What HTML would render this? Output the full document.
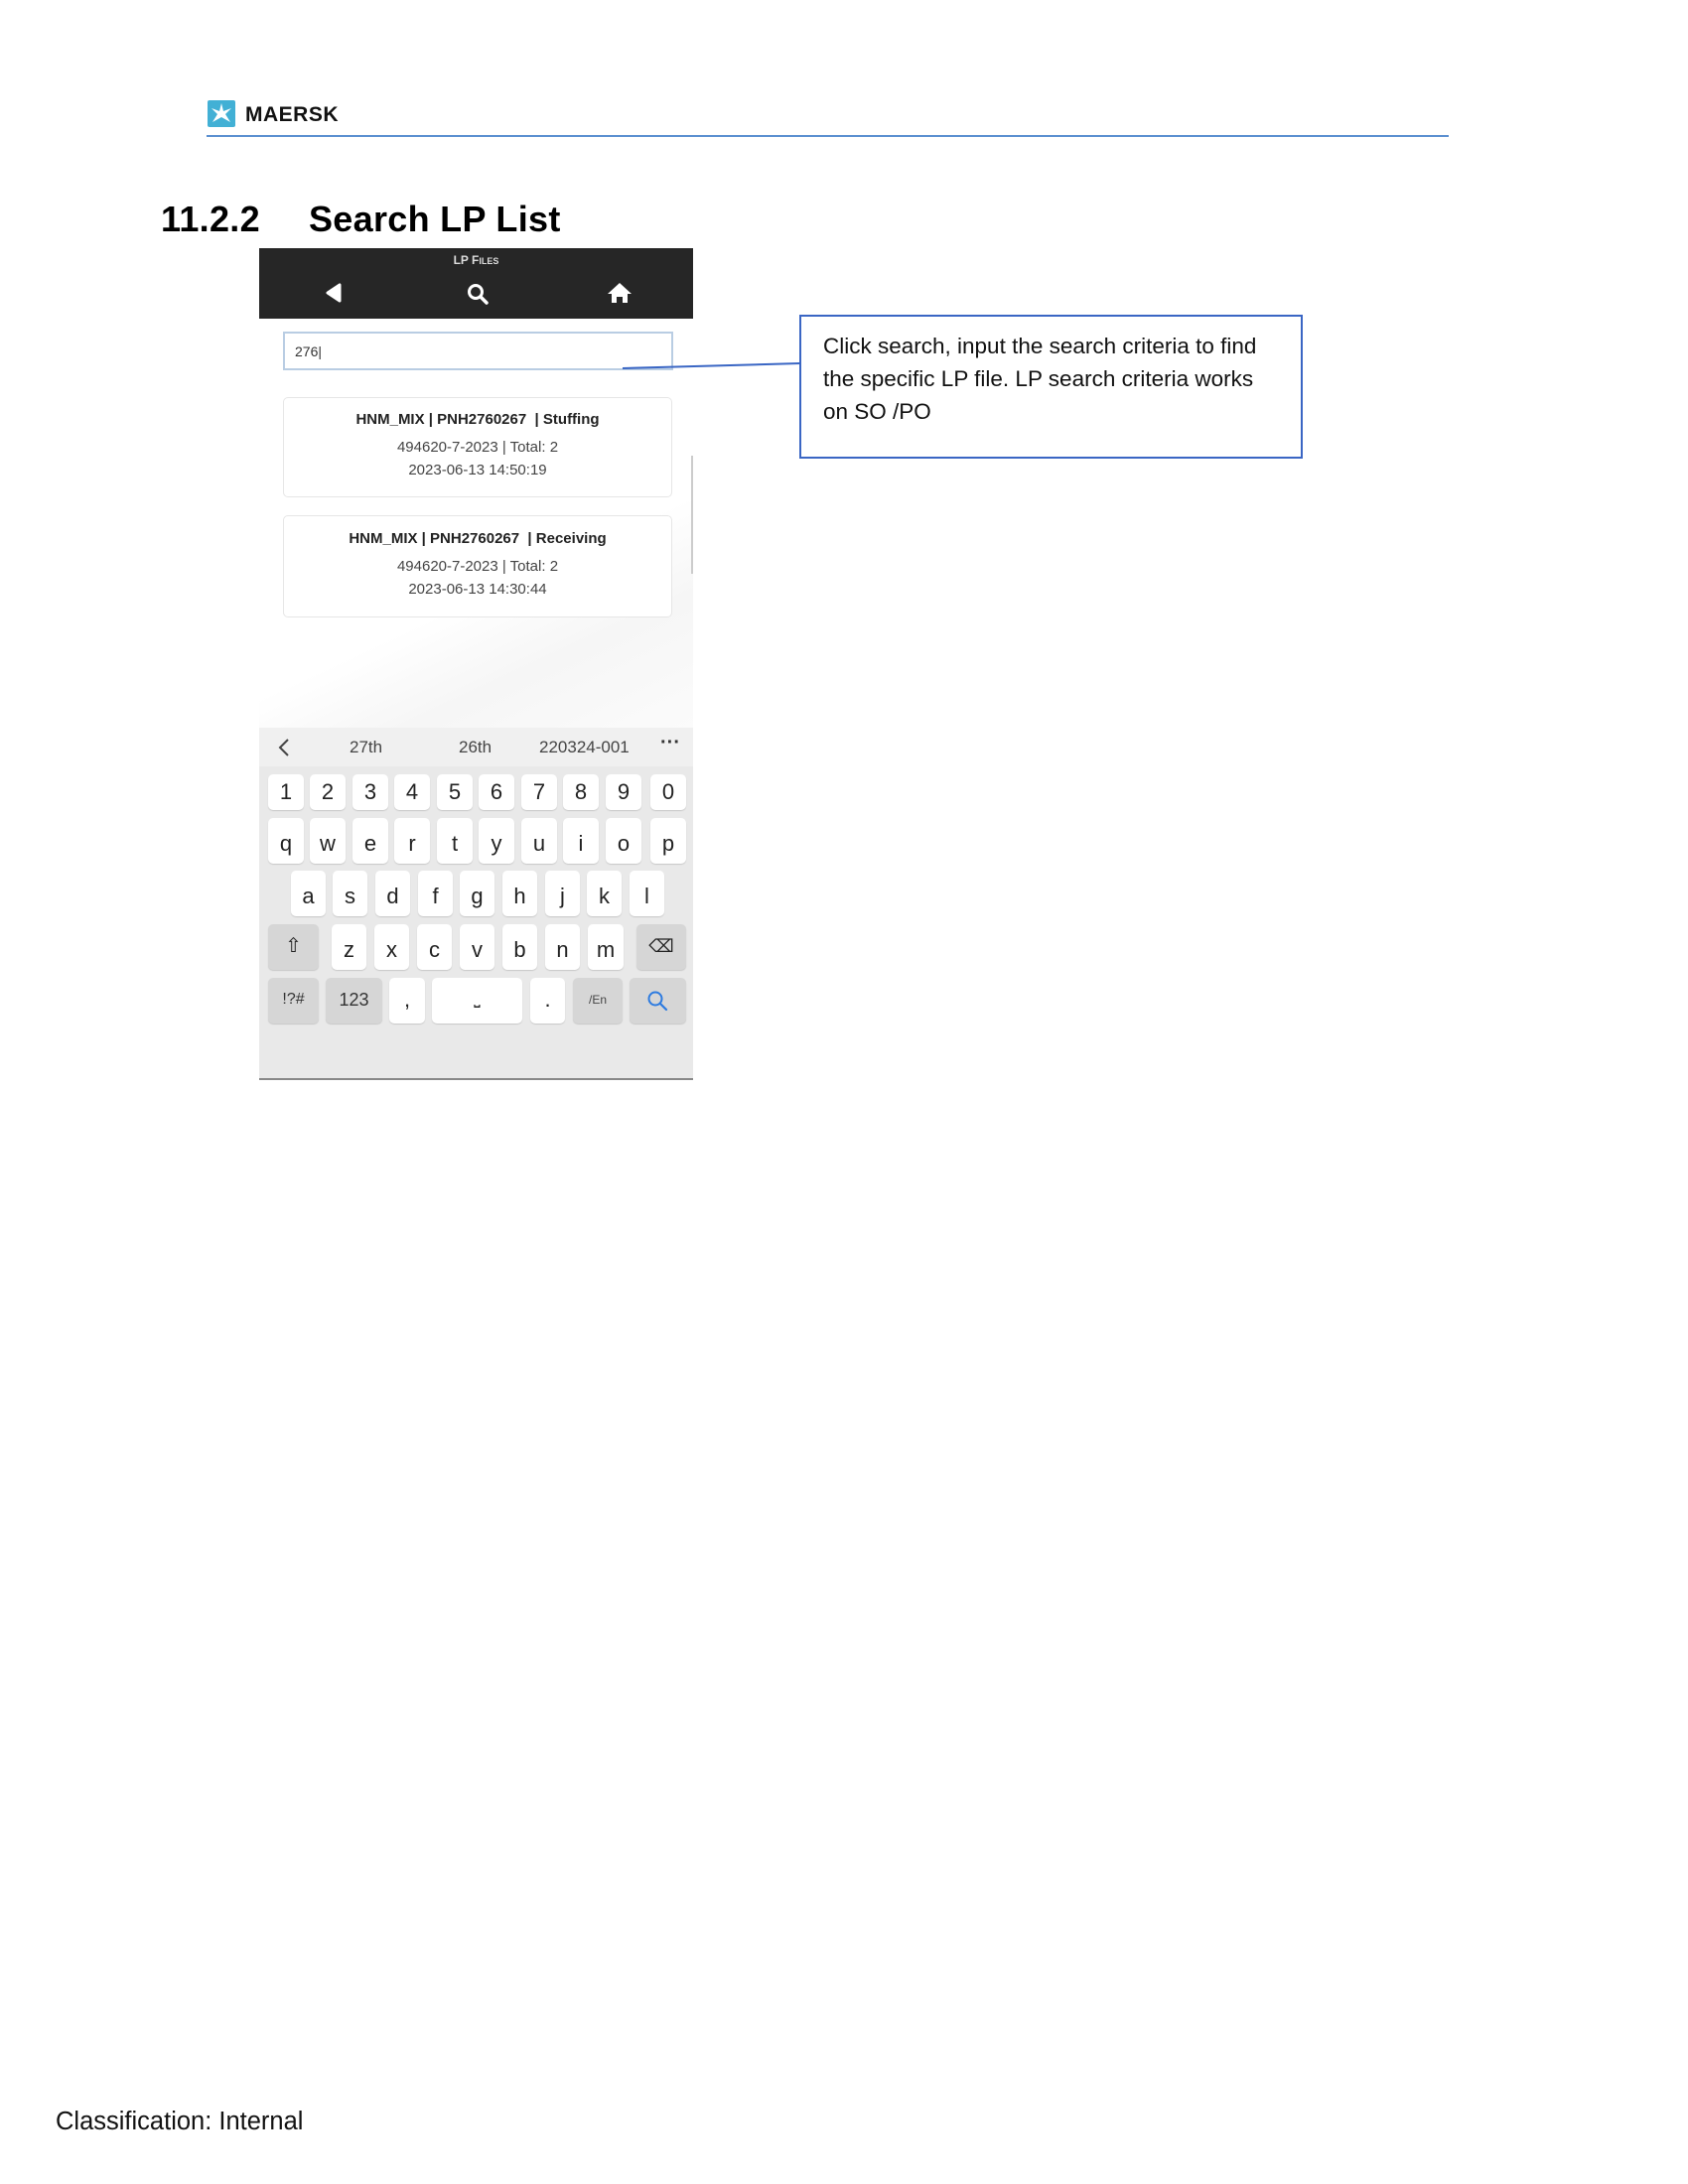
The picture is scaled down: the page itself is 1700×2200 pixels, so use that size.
<!DOCTYPE html>
<html><head><meta charset="utf-8"><style>
*{margin:0;padding:0;box-sizing:border-box}
body{width:1700px;height:2200px;background:#fff;position:relative;font-family:"Liberation Sans",Arial,sans-serif;overflow:hidden}
.a{position:absolute}
.key{position:absolute;background:#fff;border-radius:5px;box-shadow:0 1px 1px #c8c8c8;font-size:22px;color:#222;text-align:center;line-height:44px}
.g{background:#d6d6d6}
.card{position:absolute;left:285px;width:392px;background:#fff;border:1px solid #e6e6e6;border-radius:5px;text-align:center;color:#444;font-size:15px}
.card b{color:#222}
</style></head><body>
<!-- header -->
<div class="a" style="left:209px;top:101px;width:28px;height:27px;background:#42b0d5;border-radius:2px"></div>
<svg class="a" style="left:209px;top:101px" width="28" height="27" viewBox="0 0 28 27"><g fill="#fff"><polygon points="14,3 16,11 24,8 18,14 23,22 14,17 5,22 10,14 4,8 12,11"/></g></svg>
<div class="a" style="left:247px;top:104px;font-size:21px;font-weight:bold;color:#111;letter-spacing:0.5px">MAERSK</div>
<div class="a" style="left:208px;top:136px;width:1251px;height:2px;background:#5b8fd0"></div>
<div class="a" style="left:162px;top:200px;font-size:36px;font-weight:bold;color:#000;letter-spacing:0.3px">11.2.2</div>
<div class="a" style="left:311px;top:200px;font-size:36px;font-weight:bold;color:#000;letter-spacing:0.3px">Search LP List</div>

<!-- phone -->
<div class="a" style="left:261px;top:250px;width:437px;height:71px;background:#262626"></div>
<div class="a" style="left:261px;top:255px;width:437px;text-align:center;color:#ddd;font-size:12px;font-weight:bold">LP F<span style="font-size:9px">ILES</span></div>
<svg class="a" style="left:326px;top:284px" width="22" height="22"><polygon points="4,11 16,3 16,19" fill="#fff" stroke="#fff" stroke-width="3" stroke-linejoin="round"/></svg>
<svg class="a" style="left:469px;top:284px" width="24" height="24"><circle cx="10" cy="10" r="6.5" fill="none" stroke="#fff" stroke-width="3"/><line x1="15" y1="15" x2="21" y2="21" stroke="#fff" stroke-width="3.5" stroke-linecap="round"/></svg>
<svg class="a" style="left:611px;top:283px" width="26" height="24"><polygon points="13,2 25,13 21,13 21,22 16,22 16,16 10,16 10,22 5,22 5,13 1,13" fill="#fff"/></svg>
<div class="a" style="left:261px;top:321px;width:437px;height:413px;background:linear-gradient(155deg,#fff 62%,#f6f6f6 78%,#fbfbfb)"></div>
<div class="a" style="left:285px;top:334px;width:393px;height:39px;border:2px solid #b9cde3;background:#fff;font-size:14px;color:#333;padding:10px 0 0 10px">276|</div>
<div class="a" style="left:696px;top:459px;width:2px;height:119px;background:#ccc"></div>
<div class="card" style="top:400px;height:101px"><div style="margin-top:13px"><b>HNM_MIX | PNH2760267 &nbsp;| Stuffing</b></div><div style="margin-top:11px">494620-7-2023 | Total: 2</div><div style="margin-top:6px">2023-06-13 14:50:19</div></div>
<div class="card" style="top:519px;height:103px"><div style="margin-top:14px"><b>HNM_MIX | PNH2760267 &nbsp;| Receiving</b></div><div style="margin-top:11px">494620-7-2023 | Total: 2</div><div style="margin-top:6px">2023-06-13 14:30:44</div></div>

<!-- connector & callout -->
<svg class="a" style="left:0;top:0" width="1700" height="500"><line x1="627" y1="371" x2="806" y2="366" stroke="#3a66c4" stroke-width="2"/></svg>
<div class="a" style="left:805px;top:317px;width:507px;height:145px;border:2px solid #3a66c4;background:#fff;padding:13px 0 0 22px;font-size:22.5px;line-height:33px;color:#111;white-space:nowrap">Click search, input the search criteria to find<br>the specific LP file. LP search criteria works<br>on SO /PO</div>

<!-- keyboard -->
<div class="a" style="left:261px;top:733px;width:437px;height:355px;background:#e9e9e9;border-bottom:2px solid #888"></div>
<div class="a" style="left:261px;top:733px;width:437px;height:39px;background:#f0f0f0;font-size:17px;color:#444"></div>
<svg class="a" style="left:278px;top:742px" width="16" height="22"><polyline points="12,3 4,11 12,19" fill="none" stroke="#444" stroke-width="2"/></svg>
<div class="a" style="left:352px;top:743px;font-size:17px;color:#444">27th</div>
<div class="a" style="left:462px;top:743px;font-size:17px;color:#444">26th</div>
<div class="a" style="left:543px;top:743px;font-size:17px;color:#444">220324-001</div>
<div class="a" style="left:665px;top:737px;font-size:20px;color:#333;font-weight:bold">···</div>

<div class="key" style="left:270px;top:780px;width:36px;height:36px;line-height:36px">1</div>
<div class="key" style="left:312px;top:780px;width:36px;height:36px;line-height:36px">2</div>
<div class="key" style="left:355px;top:780px;width:36px;height:36px;line-height:36px">3</div>
<div class="key" style="left:397px;top:780px;width:36px;height:36px;line-height:36px">4</div>
<div class="key" style="left:440px;top:780px;width:36px;height:36px;line-height:36px">5</div>
<div class="key" style="left:482px;top:780px;width:36px;height:36px;line-height:36px">6</div>
<div class="key" style="left:525px;top:780px;width:36px;height:36px;line-height:36px">7</div>
<div class="key" style="left:567px;top:780px;width:36px;height:36px;line-height:36px">8</div>
<div class="key" style="left:610px;top:780px;width:36px;height:36px;line-height:36px">9</div>
<div class="key" style="left:655px;top:780px;width:36px;height:36px;line-height:36px">0</div>

<div class="key" style="left:270px;top:824px;width:36px;height:46px;line-height:52px">q</div>
<div class="key" style="left:312px;top:824px;width:36px;height:46px;line-height:52px">w</div>
<div class="key" style="left:355px;top:824px;width:36px;height:46px;line-height:52px">e</div>
<div class="key" style="left:397px;top:824px;width:36px;height:46px;line-height:52px">r</div>
<div class="key" style="left:440px;top:824px;width:36px;height:46px;line-height:52px">t</div>
<div class="key" style="left:482px;top:824px;width:36px;height:46px;line-height:52px">y</div>
<div class="key" style="left:525px;top:824px;width:36px;height:46px;line-height:52px">u</div>
<div class="key" style="left:567px;top:824px;width:36px;height:46px;line-height:52px">i</div>
<div class="key" style="left:610px;top:824px;width:36px;height:46px;line-height:52px">o</div>
<div class="key" style="left:655px;top:824px;width:36px;height:46px;line-height:52px">p</div>

<div class="key" style="left:293px;top:877px;width:35px;height:46px;line-height:52px">a</div>
<div class="key" style="left:335px;top:877px;width:35px;height:46px;line-height:52px">s</div>
<div class="key" style="left:378px;top:877px;width:35px;height:46px;line-height:52px">d</div>
<div class="key" style="left:421px;top:877px;width:35px;height:46px;line-height:52px">f</div>
<div class="key" style="left:463px;top:877px;width:35px;height:46px;line-height:52px">g</div>
<div class="key" style="left:506px;top:877px;width:35px;height:46px;line-height:52px">h</div>
<div class="key" style="left:549px;top:877px;width:35px;height:46px;line-height:52px">j</div>
<div class="key" style="left:591px;top:877px;width:35px;height:46px;line-height:52px">k</div>
<div class="key" style="left:634px;top:877px;width:35px;height:46px;line-height:52px">l</div>

<div class="key g" style="left:270px;top:931px;width:51px;height:46px;font-size:20px">⇧</div>
<div class="key" style="left:334px;top:931px;width:35px;height:46px;line-height:52px">z</div>
<div class="key" style="left:377px;top:931px;width:35px;height:46px;line-height:52px">x</div>
<div class="key" style="left:420px;top:931px;width:35px;height:46px;line-height:52px">c</div>
<div class="key" style="left:463px;top:931px;width:35px;height:46px;line-height:52px">v</div>
<div class="key" style="left:506px;top:931px;width:35px;height:46px;line-height:52px">b</div>
<div class="key" style="left:549px;top:931px;width:35px;height:46px;line-height:52px">n</div>
<div class="key" style="left:592px;top:931px;width:36px;height:46px;line-height:52px">m</div>
<div class="key g" style="left:641px;top:931px;width:50px;height:46px;font-size:18px">⌫</div>

<div class="key g" style="left:270px;top:985px;width:51px;height:46px;font-size:16px;color:#333">!?#</div>
<div class="key g" style="left:328px;top:985px;width:57px;height:46px;font-size:18px;color:#333">123</div>
<div class="key" style="left:392px;top:985px;width:36px;height:46px">,</div>
<div class="key" style="left:435px;top:985px;width:91px;height:46px;font-size:16px">⎵</div>
<div class="key" style="left:534px;top:985px;width:35px;height:46px">.</div>
<div class="key g" style="left:577px;top:985px;width:50px;height:46px;font-size:12px;color:#444">/En</div>
<div class="key g" style="left:634px;top:985px;width:57px;height:46px"></div>
<svg class="a" style="left:650px;top:996px" width="24" height="24"><circle cx="10" cy="10" r="6.5" fill="none" stroke="#2d7be0" stroke-width="2"/><line x1="15" y1="15" x2="21" y2="21" stroke="#2d7be0" stroke-width="2.2" stroke-linecap="round"/></svg>

<div class="a" style="left:56px;top:2123px;font-size:25.5px;color:#111">Classification: Internal</div>
</body></html>
